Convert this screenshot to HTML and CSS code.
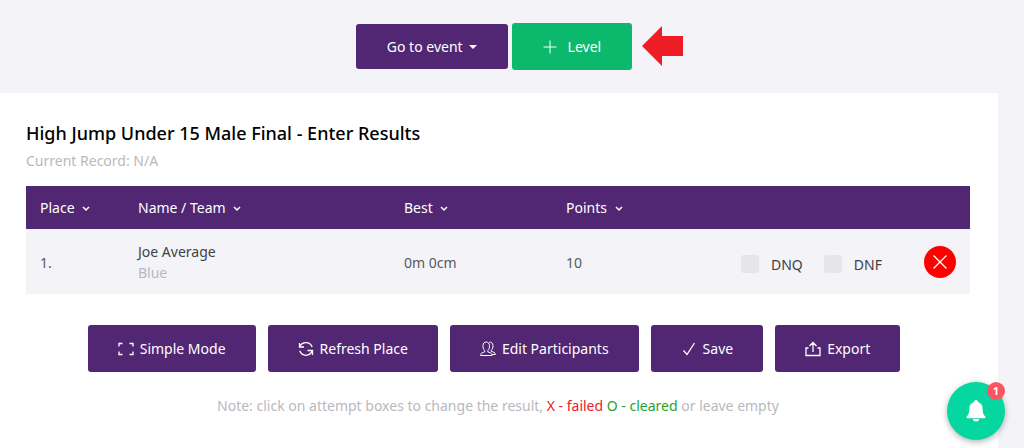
FILE: index.html
```html
<!DOCTYPE html>
<html lang="en">
<head>
<meta charset="utf-8">
<meta name="viewport" content="width=device-width, initial-scale=1">
<title>High Jump Under 15 Male Final - Enter Results</title>
<link rel="stylesheet" href="styles.css">
</head>
<body>
<div class="page">
  <nav class="toolbar">
    <button class="btn btn-menu" type="button">Go to event <span class="caret"></span></button>
    <div class="level">
      <button class="btn btn-add" type="button">
        <svg class="plus" viewBox="0 0 14 14" aria-hidden="true"><path d="M7 .5v13M.5 7h13"/></svg>Level
      </button>
      <svg class="arrow" viewBox="0 0 41 40" aria-hidden="true"><path d="M0 20 20 0v10h21v20H20v10z"/></svg>
    </div>
  </nav>

  <main class="card">
    <h1 class="title">High Jump Under 15 Male Final - Enter Results</h1>
    <p class="record">Current Record: N/A</p>

    <table class="results">
      <colgroup><col class="c-place"><col class="c-name"><col class="c-best"><col class="c-points"><col class="c-flags"><col class="c-remove"></colgroup>
      <thead>
        <tr>
          <th scope="col">Place <svg class="chev" viewBox="0 0 8 6" aria-hidden="true"><path d="m1 1 3 3 3-3"/></svg></th>
          <th scope="col">Name / Team <svg class="chev" viewBox="0 0 8 6" aria-hidden="true"><path d="m1 1 3 3 3-3"/></svg></th>
          <th scope="col">Best <svg class="chev" viewBox="0 0 8 6" aria-hidden="true"><path d="m1 1 3 3 3-3"/></svg></th>
          <th scope="col">Points <svg class="chev" viewBox="0 0 8 6" aria-hidden="true"><path d="m1 1 3 3 3-3"/></svg></th>
          <td></td>
          <td></td>
        </tr>
      </thead>
      <tbody>
        <tr>
          <td>1.</td>
          <td><div class="name">Joe Average</div><div class="team">Blue</div></td>
          <td>0m 0cm</td>
          <td>10</td>
          <td>
            <div class="flags">
              <label class="flag"><input class="check" type="checkbox">DNQ</label>
              <label class="flag"><input class="check" type="checkbox">DNF</label>
            </div>
          </td>
          <td>
            <button class="remove" type="button" aria-label="Remove">
              <svg class="cross" viewBox="0 0 16 16" aria-hidden="true"><path d="m1.5 1.5 13 13M14.500 1.500l-13 13"/></svg>
            </button>
          </td>
        </tr>
      </tbody>
    </table>

    <div class="actions">
      <button class="btn" type="button">
        <svg class="icon" viewBox="0 0 16 16" aria-hidden="true"><path d="M1 5.500V2.500h3.500M11.500 2.500H15v3M15 10.500v3h-3.500M4.500 13.500H1v-3"/></svg>Simple Mode
      </button>
      <button class="btn" type="button">
        <svg class="icon" viewBox="0 0 16 16" aria-hidden="true"><path d="M1.500 2v4h4.500M1.800 5.700C3 3 5.300 1.700 8 1.700c2.800 0 5.200 1.700 6.200 4.300M14.500 14v-4.500H9.500M14.200 9.800C13 12.800 10.700 14.300 8 14.300c-2.800 0-5.300-1.800-6.300-4.500"/></svg>Refresh Place
      </button>
      <button class="btn" type="button">
        <svg class="icon icon-thin" viewBox="0 0 16 16" aria-hidden="true"><path d="M4.700 9.600C3.200 8.200 2.900 6.400 3 4.500 3.100 2.300 4.300 1 6.200 1s3.200 1.300 3.300 3.500c.1 1.900-.3 3.700-1.700 5.100v1.200l3 1.200c.8.400 1.100 1.100 1.200 2.500H.7c0-1.400.3-2.100 1.100-2.500l2.900-1.200zM9.300 1.200c2-.4 3.600.9 3.700 3.300.1 1.900-.4 3.600-1.800 4.700v1.100l3 1.100c.8.400 1.100 1 1.100 2.100H12"/></svg>Edit Participants
      </button>
      <button class="btn" type="button">
        <svg class="icon" viewBox="0 0 16 16" aria-hidden="true"><path d="m2.500 9.500 3.500 4L13.500 2"/></svg>Save
      </button>
      <button class="btn" type="button">
        <svg class="icon" viewBox="0 0 16 16" aria-hidden="true"><path d="M3.500 7H1v7.500h14V7h-2.500M8 11V1.500M4.500 5 8 1.500 11.500 5"/></svg>Export
      </button>
    </div>

    <p class="note">Note: click on attempt boxes to change the result, <span class="failed">X - failed</span> <span class="cleared">O - cleared</span> or leave empty</p>
  </main>
</div>

<button class="bell" type="button" aria-label="Notifications">
  <svg class="bell-icon" viewBox="0 0 20 22" aria-hidden="true"><path d="M10 0a2 2 0 0 1 2 2c2.900.9 4.600 3.200 4.600 6.200 0 4.300.7 6.300 2.600 8.300.6.700.3 1.700-.7 1.700h-17c-1 0-1.300-1-.7-1.700 1.900-2 2.600-4 2.600-8.300C3.400 5.200 5.100 2.900 8 2a2 2 0 0 1 2-2zM7 19h6a3 2.500 0 0 1-6 0z"/></svg>
  <span class="badge">1</span>
</button>
</body>
</html>
```

FILE: styles.css
```css
* { box-sizing: border-box; }

body {
  margin: 0;
  background: #f3f3f8;
  color: #575962;
  font: 14px/21px "Noto Sans", "Open Sans", sans-serif;
}

button { font: inherit; border: 0; cursor: pointer; }

.page {
  display: flex;
  flex-direction: column;
  min-height: 100vh;
  margin-right: 26px;
}

.toolbar {
  display: flex;
  justify-content: center;
  align-items: center;
  gap: 4px;
  padding: 23px 10px 23px 0;
}

.btn {
  display: flex;
  align-items: center;
  justify-content: center;
  gap: 6px;
  padding: 13px 30px;
  border-radius: 3px;
  background: #512773;
  color: #fff;
  white-space: nowrap;
}

.btn-menu { padding: 12px 31px; }

.btn-add { gap: 11px; padding: 13px 31px; background: #0cb86b; }

.caret {
  border: 4px solid transparent;
  border-top-color: #fff;
  border-bottom: 0;
}

.plus {
  width: 14px;
  height: 14px;
  fill: none;
  stroke: #fff;
}

.level { position: relative; }

.arrow {
  position: absolute;
  left: 100%;
  top: 3px;
  width: 41px;
  height: 40px;
  margin-left: 10px;
  fill: #ee1c25;
}

.card {
  flex: 1;
  padding: 28px 28px 24px 26px;
  background: #fff;
}

.title {
  margin: 0;
  color: #000;
  font-size: 18px;
  font-weight: 500;
  line-height: 24px;
}

.record {
  margin: 5px 0 15px;
  color: #b9b9bd;
}

.results {
  width: 100%;
  table-layout: fixed;
  border-collapse: collapse;
}

.c-place { width: 98px; }
.c-name { width: 266px; }
.c-best { width: 162px; }
.c-points { width: 175px; }
.c-remove { width: 60px; }

.results th,
.results td {
  padding: 11px 14px;
  text-align: left;
  vertical-align: middle;
}

.results thead {
  background: #512773;
  color: #fff;
}

.results th { font-weight: 400; }

.results tbody { background: #f3f3f8; }

.results tbody td { padding: 12px 14px 11px; }

.chev {
  width: 8px;
  height: 6px;
  margin-left: 4px;
  vertical-align: 1px;
  fill: none;
  stroke: #fff;
  stroke-width: 1.5;
}

.name { color: #3f4047; }
.team { color: #b9b9bd; }

.flags {
  display: flex;
  gap: 21px;
  padding-top: 4px;
}

.flag {
  display: flex;
  align-items: center;
  gap: 12px;
  color: #3f4047;
}

.check {
  appearance: none;
  width: 18px;
  height: 18px;
  margin: 0;
  border-radius: 3px;
  background: #e6e6e8;
}

.check:checked { background: #512773; }

.remove {
  display: flex;
  align-items: center;
  justify-content: center;
  width: 32px;
  height: 32px;
  padding: 0;
  border-radius: 50%;
  background: #f00;
}

.cross {
  width: 16px;
  height: 16px;
  fill: none;
  stroke: #fff;
  stroke-width: 1.300;
}

.actions {
  display: flex;
  flex-wrap: wrap;
  justify-content: center;
  gap: 12px;
  margin: 31px 0 23px;
  padding-right: 8px;
}

.icon {
  width: 16px;
  height: 16px;
  fill: none;
  stroke: #fff;
  stroke-width: 1.300;
}

.icon-thin { stroke-width: 1; }

.note {
  margin: 0;
  color: #b9b9bd;
  text-align: center;
}

.failed { color: #e8202a; }
.cleared { color: #27a22b; }

.bell {
  position: fixed;
  right: 19px;
  bottom: 8px;
  display: flex;
  align-items: center;
  justify-content: center;
  width: 58px;
  height: 58px;
  padding: 0;
  border-radius: 50%;
  background: #06d6a0;
  box-shadow: 0 2px 6px rgba(0, 0, 0, 0.3);
}

.bell-icon {
  width: 20px;
  height: 22px;
  fill: #fff;
}

.badge {
  position: absolute;
  top: 0;
  right: 0;
  width: 18px;
  height: 18px;
  border-radius: 50%;
  background: #fc5561;
  color: #fff;
  font-size: 11px;
  font-weight: 700;
  line-height: 18px;
}
```
